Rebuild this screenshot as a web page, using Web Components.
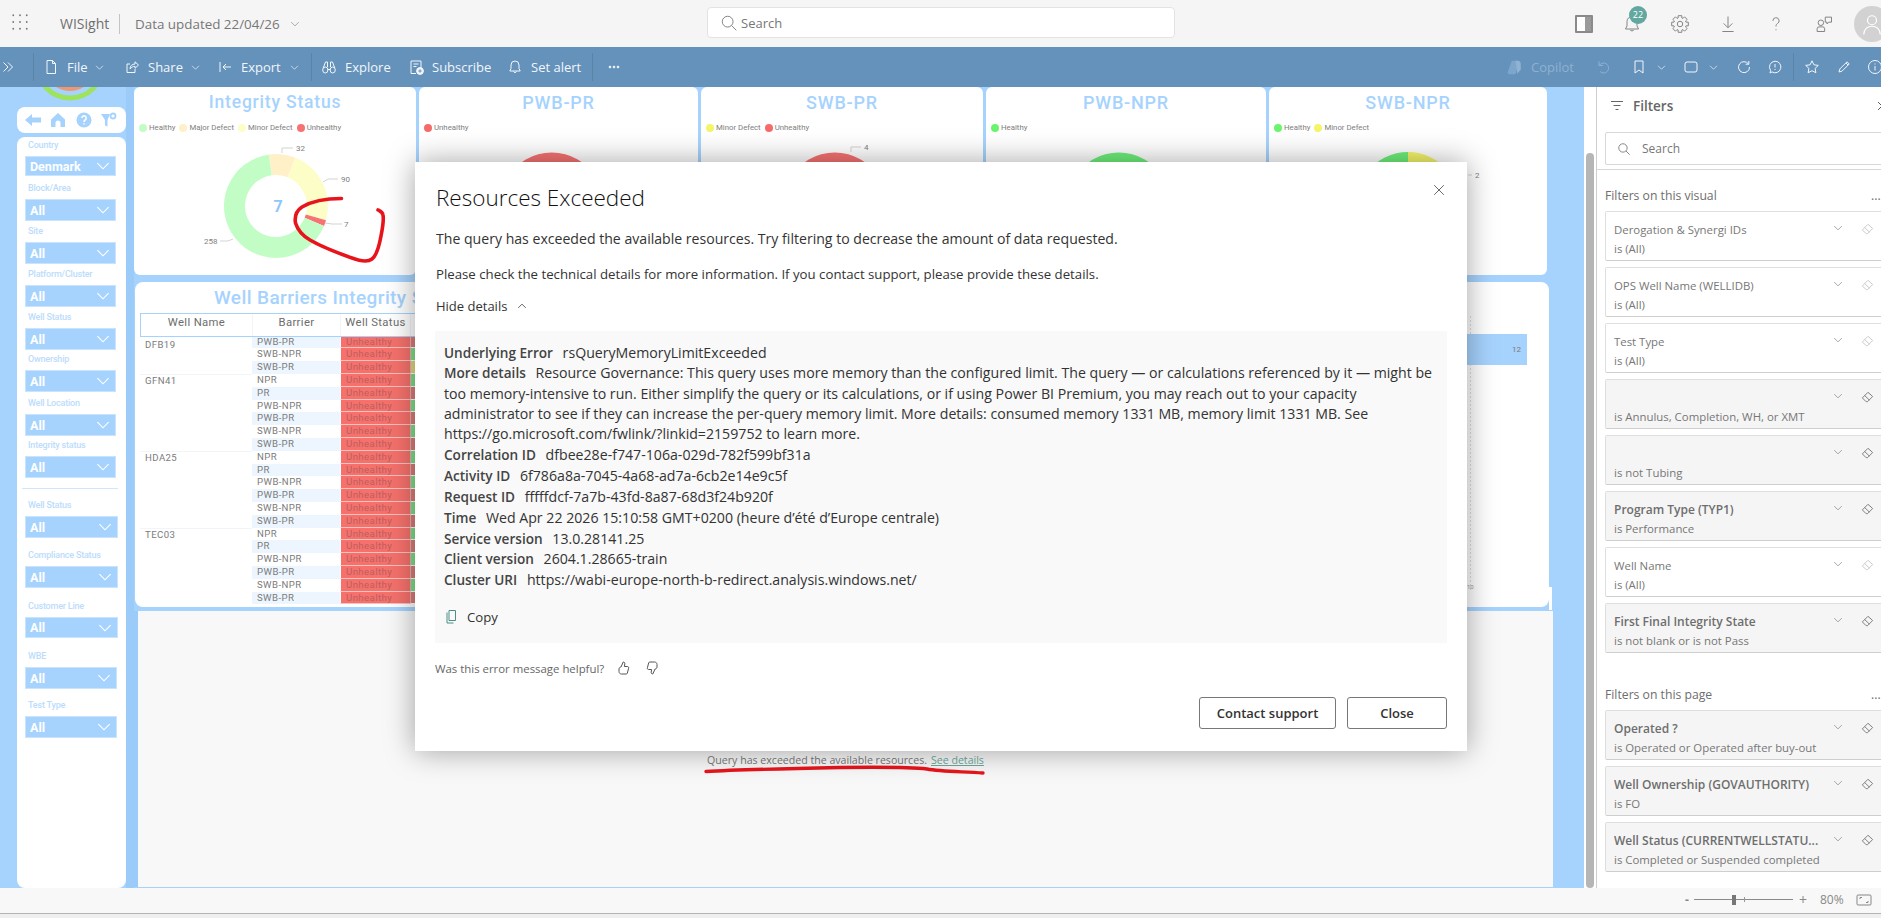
<!doctype html>
<html>
<head>
<meta charset="utf-8">
<title>WISight</title>
<style>
  html, body { margin: 0; height: 100%; overflow: hidden; }
  body {
    position: relative;
    width: 1881px; height: 918px;
    display: flex; flex-direction: column;
    background: #efefef;
    font-family: "Open Sans", "Noto Sans", sans-serif;
  }
</style>
</head>
<body>

<wi-topbar></wi-topbar>
<wi-ribbon></wi-ribbon>

<wi-workspace>
  <wi-report>
    <wi-slicer-rail slot="rail">
      <wi-slicer label="Country" value="Denmark" style="--top:-2px;--h:20px"></wi-slicer>
      <wi-slicer label="Block/Area" style="--top:2px"></wi-slicer>
      <wi-slicer label="Site"></wi-slicer>
      <wi-slicer label="Platform/Cluster"></wi-slicer>
      <wi-slicer label="Well Status"></wi-slicer>
      <wi-slicer label="Ownership" style="--top:-1px"></wi-slicer>
      <wi-slicer label="Well Location" style="--top:1px"></wi-slicer>
      <wi-slicer label="Integrity status" style="--top:-1px"></wi-slicer>
      <hr slot="lower" style="border:0;height:1px;background:#cfe6fd;margin:10px 0 0 -3px;width:96px">
      <wi-slicer slot="lower" label="Well Status" style="--top:6px;--w:93px"></wi-slicer>
      <wi-slicer slot="lower" label="Compliance Status" style="--top:7px;--w:93px"></wi-slicer>
      <wi-slicer slot="lower" label="Customer Line" style="--top:8px;--w:93px;--h:21px"></wi-slicer>
      <wi-slicer slot="lower" label="WBE" style="--top:8px;--w:92px"></wi-slicer>
      <wi-slicer slot="lower" label="Test Type" style="--top:6px;--w:92px"></wi-slicer>
    </wi-slicer-rail>

    <wi-chart-card slot="charts" heading="Integrity Status" cx="142" cy="69" hole="31"
      segments="30:#fff0c8,84:#fdfdc8,6.5:#f77272,239.5:#c3fdc6"
      labels='[["32",162,11,"148,16 148,11 159,11"],["90",207,42,"189,45 194,42 204,42"],["7",210,87,"191,86 198,87 208,87"],["258",70,104,"99,102 94,104 86,104"]]'
      center="7" style="--ts:17.5px">
      <wi-legend color="#c3fdc6">Healthy</wi-legend>
      <wi-legend color="#fff0c8">Major Defect</wi-legend>
      <wi-legend color="#fdfdc8">Minor Defect</wi-legend>
      <wi-legend color="#f77272">Unhealthy</wi-legend>
    </wi-chart-card>
    <wi-chart-card slot="charts" heading="PWB-PR" cx="140" cy="67" hole="31" segments="360:#f77272">
      <wi-legend color="#f76b6b">Unhealthy</wi-legend>
    </wi-chart-card>
    <wi-chart-card slot="charts" heading="SWB-PR" cx="141" cy="67" hole="31" segments="360:#f77272"
      labels='[["4",163,10,"150,15 150,10 160,10"]]'>
      <wi-legend color="#f5f56a">Minor Defect</wi-legend>
      <wi-legend color="#f76b6b">Unhealthy</wi-legend>
    </wi-chart-card>
    <wi-chart-card slot="charts" heading="PWB-NPR" cx="140" cy="67" hole="31" segments="360:#6ef07a">
      <wi-legend color="#6bf56f">Healthy</wi-legend>
    </wi-chart-card>
    <wi-chart-card slot="charts" heading="SWB-NPR" cx="139" cy="67" hole="31" start="0" segments="50:#f5f56a,310:#6ef07a"
      labels='[["2",206,38,"199,38 203,38"]]'>
      <wi-legend color="#6bf56f">Healthy</wi-legend>
      <wi-legend color="#f5f56a">Minor Defect</wi-legend>
    </wi-chart-card>

    <wi-barrier-card slot="table" heading="Well Barriers Integrity S"></wi-barrier-card>

    <wi-blank-visual slot="blank"></wi-blank-visual>
  </wi-report>

  <wi-filter-pane>
    <wi-filter-card heading="Derogation &amp; Synergi IDs" value="is (All)"></wi-filter-card>
    <wi-filter-card heading="OPS Well Name (WELLIDB)" value="is (All)"></wi-filter-card>
    <wi-filter-card heading="Test Type" value="is (All)"></wi-filter-card>
    <wi-filter-card applied value="is Annulus, Completion, WH, or XMT"></wi-filter-card>
    <wi-filter-card applied value="is not Tubing"></wi-filter-card>
    <wi-filter-card applied heading="Program Type (TYP1)" value="is Performance"></wi-filter-card>
    <wi-filter-card heading="Well Name" value="is (All)"></wi-filter-card>
    <wi-filter-card applied heading="First Final Integrity State" value="is not blank or is not Pass"></wi-filter-card>
    <wi-filter-card slot="page" applied heading="Operated ?" value="is Operated or Operated after buy-out"></wi-filter-card>
    <wi-filter-card slot="page" applied heading="Well Ownership (GOVAUTHORITY)" value="is FO"></wi-filter-card>
    <wi-filter-card slot="page" applied heading="Well Status (CURRENTWELLSTATU..." value="is Completed or Suspended completed"></wi-filter-card>
  </wi-filter-pane>
</wi-workspace>

<wi-statusbar></wi-statusbar>
<wi-annotations></wi-annotations>
<wi-error-dialog></wi-error-dialog>

<template id="wi-topbar-template">
  <style>
    :host { display: grid; grid-template-columns: 707px 468px 1fr; height: 47px; background: #f5f5f5; color: #777; font-size: 13px; overflow: hidden; flex: none; --sw: .8; }
    .left { display: flex; align-items: center; }
    .waffle { width: 60px; padding-left: 11px; box-sizing: border-box; color: #777; }
    .name { padding-right: 9px; margin-right: 15px; border-right: 1px solid #c4c4c4; line-height: 20px; color: #707070; font-size: 14px; width: 50px; white-space: nowrap; }
    .data { margin-right: 9px; font-size: 13.4px; white-space: nowrap; }
    .search { margin: 7px 0 9px; background: #fff; border: 1px solid #e3e3e3; border-radius: 4px; display: flex; align-items: center; gap: 3px; padding-left: 12px; color: #777; }
    .right { display: flex; align-items: center; padding-left: 385px; }
    .cell { flex: 0 0 48px; display: flex; justify-content: center; position: relative; color: #858585; }
    .badge { position: absolute; left: 21px; top: -8px; width: 18px; height: 18px; border-radius: 50%; background: #62a8a0; color: #fff; font-size: 9px; text-align: center; line-height: 18px; }
    .panel { width: 14px; height: 14px; border: 2px solid #8a8a8a; background: linear-gradient(to right, #fff 60%, #9a9a9a 60%); border-radius: 1px; }
    .avatar { flex: 0 0 36px; height: 36px; border-radius: 50%; margin-left: 6px; background: #d2d2d2; color: #fff; display: flex; align-items: center; justify-content: center; }
  </style>
  <div class="left">
    <div class="waffle"><wi-icon name="waffle" size="18"></wi-icon></div>
    <span class="name">WISight</span>
    <span class="data">Data updated 22/04/26</span>
    <wi-icon name="chev" size="12"></wi-icon>
  </div>
  <div class="search"><wi-icon name="search" size="18"></wi-icon><span>Search</span></div>
  <div class="right">
    <div class="cell"><div class="panel"></div></div>
    <div class="cell"><wi-icon name="bell" size="20"></wi-icon><span class="badge">22</span></div>
    <div class="cell"><wi-icon name="gear" size="20"></wi-icon></div>
    <div class="cell"><wi-icon name="download" size="20"></wi-icon></div>
    <div class="cell"><wi-icon name="help" size="20"></wi-icon></div>
    <div class="cell"><wi-icon name="people" size="20"></wi-icon></div>
    <div class="avatar"><wi-icon name="person" size="24"></wi-icon></div>
  </div>
</template>

<template id="wi-ribbon-template">
  <style>
    :host { display: flex; align-items: center; height: 40px; background: #6592bb; color: #f2f6fa; font-size: 13px; overflow: hidden; flex: none; }
    .lead { flex: 0 0 33px; display: flex; justify-content: center; padding-right: 17px; box-sizing: border-box; }
    .sep { flex: none; width: 1px; height: 28px; background: #5a83a8; }
    .b { display: flex; align-items: center; flex: none; }
    .b wi-icon { margin-right: 8px; }
    .b .t { white-space: nowrap; }
    .b wi-icon.c { margin: 0 0 0 6px; }
    .r { display: flex; align-items: center; justify-content: center; flex: none; width: 24px; }
    .r.n { width: 20px; }
    .dim { color: #8fb1d1; }
  </style>
  <div class="lead"><wi-icon name="rev" size="16"></wi-icon></div>
  <div class="sep"></div>
  <div class="b" style="width:72px;margin-left:9px"><wi-icon name="file" size="16"></wi-icon><span class="t" style="width:21px">File</span><wi-icon class="c" name="chev" size="11"></wi-icon></div>
  <div class="b" style="width:86px;margin-left:9px"><wi-icon name="share" size="16"></wi-icon><span class="t" style="width:36px">Share</span><wi-icon class="c" name="chev" size="11"></wi-icon></div>
  <div class="b" style="width:86px;margin-left:7px"><wi-icon name="export" size="16"></wi-icon><span class="t" style="width:42px">Export</span><wi-icon class="c" name="chev" size="11"></wi-icon></div>
  <div class="sep" style="margin-left:8px"></div>
  <div class="b" style="width:87px;margin-left:9px"><wi-icon name="binoc" size="16"></wi-icon><span class="t">Explore</span></div>
  <div class="b" style="width:99px"><wi-icon name="subscribe" size="16"></wi-icon><span class="t">Subscribe</span></div>
  <div class="b" style="width:85px"><wi-icon name="bell" size="16"></wi-icon><span class="t">Set alert</span></div>
  <div class="sep"></div>
  <div class="b" style="margin-left:13px;width:899px"><wi-icon name="dots" size="16"></wi-icon></div>
  <div class="b dim" style="width:84px"><wi-icon name="copilot" size="18"></wi-icon><span class="t">Copilot</span></div>
  <div class="r dim" style="width:28px"><wi-icon name="undo" size="16"></wi-icon></div>
  <div class="r" style="margin-left:10px"><wi-icon name="bookmark" size="16"></wi-icon></div>
  <div class="r n"><wi-icon name="chev" size="11"></wi-icon></div>
  <div class="r" style="margin-left:8px"><wi-icon name="square" size="16"></wi-icon></div>
  <div class="r n"><wi-icon name="chev" size="11"></wi-icon></div>
  <div class="r" style="margin-left:9px"><wi-icon name="refresh" size="16"></wi-icon></div>
  <div class="r" style="margin-left:7px"><wi-icon name="chat" size="16"></wi-icon></div>
  <div class="sep" style="margin-left:6px"></div>
  <div class="r" style="margin-left:6px"><wi-icon name="star" size="16"></wi-icon></div>
  <div class="r" style="margin-left:8px"><wi-icon name="pencil" size="16"></wi-icon></div>
  <div class="r" style="margin-left:7px"><wi-icon name="info" size="16"></wi-icon></div>
</template>

<template id="wi-workspace-template">
  <style>
    :host { display: flex; height: 801px; flex: none; overflow: hidden; }
  </style>
  <slot></slot>
</template>

<template id="wi-report-template">
  <style>
    :host { display: flex; flex: 0 0 1584px; background: #a6d3fe; }
    .main { flex: 1; display: flex; flex-direction: column; min-width: 0; }
    .charts { display: grid; grid-template-columns: 282px 279px 282px 280px 278px; column-gap: 3px; height: 188px; flex: none; }
    .table { margin: 7px 35px 0 1px; height: 325px; flex: none; display: block; }
    .blank { margin-top: 4px; flex: 1; margin-bottom: 1px; background: #9bcbf8; padding-left: 4px; margin-right: 31px; display: flex; }
  </style>
  <slot name="rail"></slot>
  <div class="main">
    <div class="charts"><slot name="charts"></slot></div>
    <div class="table"><slot name="table"></slot></div>
    <div class="blank"><slot name="blank"></slot></div>
  </div>
</template>

<template id="wi-slicer-rail-template">
  <style>
    :host { display: flex; flex-direction: column; flex: 0 0 134px; box-sizing: border-box; padding-left: 17px; background: linear-gradient(to right, #a6d3fe 126px, #9bcbf8 126px); }
    .ring { height: 20px; flex: none; overflow: hidden; width: 109px; }
    .ring svg { display: block; }
    .nav { flex: none; width: 109px; height: 26px; background: #fff; border-radius: 8px; display: flex; align-items: center; justify-content: space-between; padding: 0 9px 0 8px; box-sizing: border-box; color: #a6d3fe; }
    .list { margin-top: 4px; flex: 1; width: 109px; box-sizing: border-box; background: #fff; border-radius: 8px; padding: 0 8px; display: flex; flex-direction: column; }
  </style>
  <div class="ring">
    <svg width="109" height="20" viewBox="0 0 109 20">
      <circle cx="53" cy="-22" r="33" fill="none" stroke="#9de35b" stroke-width="5"/>
      <circle cx="53" cy="-22" r="26" fill="#f09670"/>
    </svg>
  </div>
  <div class="nav">
    <wi-icon name="navback" size="16"></wi-icon>
    <wi-icon name="navhome" size="16"></wi-icon>
    <wi-icon name="navhelp" size="16"></wi-icon>
    <wi-icon name="navtool" size="16"></wi-icon>
  </div>
  <div class="list">
    <slot></slot>
    <slot name="lower"></slot>
  </div>
</template>

<template id="wi-slicer-template">
  <style>
    :host { display: block; margin-top: var(--top, 0); font-family: Roboto, sans-serif; }
    .label { color: #bcdcfc; font-size: 9px; letter-spacing: -.2px; font-weight: 500; line-height: 21px; height: 21px; padding-left: 3px; white-space: nowrap; }
    .box { height: var(--h, 22px); box-sizing: border-box; width: var(--w, 91px); background: #a6d3fe; border: 1px solid #cbe4fd; color: #fff; font-weight: 700; font-size: 12.5px; display: flex; align-items: center; justify-content: space-between; padding: 0 3px 0 4px; }
    wi-icon { color: #fff; }
  </style>
  <div class="label" id="label"></div>
  <div class="box"><span id="value"></span><wi-icon name="chev" size="18"></wi-icon></div>
</template>

<template id="wi-chart-card-template">
  <style>
    :host { display: flex; flex-direction: column; background: #fff; border-radius: 6px; overflow: hidden; font-family: Roboto, sans-serif; height: 188px; }
    .title { flex: none; height: 28px; line-height: 31px; text-align: center; color: #a6d3fe; font-size: var(--ts, 18px); font-weight: 500; letter-spacing: .8px; }
    .legend { flex: none; height: 22px; display: flex; align-items: center; gap: 4px; padding-left: 5px; padding-top: 3px; box-sizing: border-box; }
    svg { display: block; }
    text { font-family: Roboto, sans-serif; font-size: 8px; fill: #808080; }
    text.center { font-size: 16px; font-weight: 700; fill: #8fc6fb; }
  </style>
  <div class="title" id="title"></div>
  <div class="legend"><slot></slot></div>
  <svg id="chart" width="282" height="138"></svg>
</template>

<template id="wi-legend-template">
  <style>
    :host { display: inline-flex; align-items: center; gap: 2px; font-family: Roboto, sans-serif; font-size: 7.8px; color: #808080; white-space: nowrap; }
    i { width: 8px; height: 8px; border-radius: 50%; background: var(--c); }
  </style>
  <i></i><slot></slot>
</template>

<template id="wi-barrier-card-template">
  <style>
    :host { display: block; position: relative; height: 325px; background: #fff; border-radius: 8px; font-family: Roboto, sans-serif; color: #7b7b7b; }
    .title { height: 31px; line-height: 32px; padding-left: 79px; font-size: 19px; font-weight: 500; color: #a6d3fe; letter-spacing: .4px; white-space: nowrap; overflow: hidden; }
    .wrap { display: flex; }
    .table { flex: 0 0 335px; margin-left: 5px; overflow: hidden; }
    .head { display: grid; grid-template-columns: 112px 88px 70px 65px; height: 24px; box-sizing: border-box; border: 1px solid #a6d3fe; border-width: 1.5px 0 1.5px 1.5px; position: relative; background: #fff; z-index: 1; }
    .head div { text-align: center; font-size: 11.3px; line-height: 14px; color: #6d6d6d; letter-spacing: .35px; border-right: 1px solid #f0f4f8; padding-top: 2px; box-sizing: border-box; }
    .rows { display: grid; grid-template-columns: 112px 88px 70px 65px; grid-auto-rows: 12.8px; margin-top: -1.4px; font-size: 9.6px; letter-spacing: .42px; line-height: 12.8px; }
    .well { padding-left: 5px; border-top: 1px solid #f1f5f9; box-sizing: border-box; line-height: 11.5px; }
    .well:first-child { padding-top: 2px; }
    .barrier { padding-left: 5px; }
    .barrier.band { background: #edf6fe; }
    .status { background: #f6716c; color: #b9605f; padding-left: 5px; border-bottom: 1px solid #f5c3c0; box-sizing: border-box; border-left: 1px solid #fff; }
    .next { border-left: 1px solid #e8b0ac; border-bottom: 1px solid #fff; box-sizing: border-box; }
    .plot { flex: 1; display: flex; justify-content: flex-end; padding-right: 22px; }
    .area { width: 107px; margin-top: 3px; height: 274px; background: repeating-linear-gradient(to bottom, #ddd 0 2px, transparent 2px 4px) 50px 0 / 1px 100% no-repeat; display: flex; flex-direction: column; }
    .bar { height: 31px; background: #a6d3fe; margin-top: 18px; text-align: right; padding-right: 6px; font-size: 8px; line-height: 31px; color: #7a7a7a; flex: none; }
    .tick { margin-top: auto; font-size: 6px; color: #9a9a9a; padding-left: 47px; }
    .patch { position: absolute; right: -3px; bottom: -3px; width: 3px; height: 23px; background: #fff; }
  </style>
  <div class="title" id="title"></div>
  <div class="wrap">
    <div class="table">
      <div class="head"><div>Well Name</div><div>Barrier</div><div>Well Status</div><div></div></div>
      <div class="rows" id="rows"></div>
    </div>
    <div class="plot"><div class="area"><div class="bar">12</div><div class="tick">10</div></div></div>
  </div>
  <div class="patch"></div>
</template>

<template id="wi-blank-visual-template">
  <style>
    :host { display: flex; flex: 1; justify-content: center; padding-top: 142px; box-sizing: border-box; background: #f8f8f8; font-size: 10.6px; color: #787878; }
    a { color: #6da89f; margin-left: 4px; text-decoration: underline; }
  </style>
  <span>Query has exceeded the available resources.<a>See details</a></span>
</template>

<template id="wi-filter-pane-template">
  <style>
    :host { display: flex; flex-direction: column; flex: 1; min-width: 0; background: #fff; overflow: hidden; color: #6e6e6e; position: relative; }
    .scrollrow { display: flex; flex: 1; min-height: 0; }
    .track { flex: 0 0 13px; box-sizing: border-box; padding: 66px 2px 0; border-right: 1px solid #cfcfcf; }
    .thumb { height: 100%; background: #b6b6b6; border-radius: 4px; }
    .pane { flex: 1; min-width: 0; overflow: hidden; }
    .head { height: 83px; border-bottom: 1px solid #d8d8d8; box-sizing: border-box; }
    .title { height: 38px; display: flex; align-items: center; padding-left: 12px; gap: 8px; font-size: 13.5px; font-weight: 600; color: #666; position: relative; }
    .title wi-icon.x { position: absolute; left: 278px; color: #444; }
    .search { margin: 7px 0 0 8px; width: 290px; height: 33px; border: 1px solid #d8d8d8; border-radius: 2px; box-sizing: border-box; display: flex; align-items: center; padding-left: 11px; gap: 11px; font-size: 12px; color: #777; }
    .section { padding: 17px 0 6px 8px; height: 18px; line-height: 18px; font-size: 12.2px; color: #6e6e6e; position: relative; }
    .section.second { padding-top: 27px; }
    .section span { position: absolute; left: 274px; }
    .cards { padding-left: 8px; }
  </style>
  <div class="scrollrow">
    <div class="track"><div class="thumb"></div></div>
    <div class="pane">
      <div class="head">
        <div class="title"><wi-icon name="funnel" size="16"></wi-icon>Filters<wi-icon class="x" name="rev" size="14"></wi-icon></div>
        <div class="search"><wi-icon name="search" size="14"></wi-icon>Search</div>
      </div>
      <div class="section">Filters on this visual<span>...</span></div>
      <div class="cards"><slot></slot></div>
      <div class="section second">Filters on this page<span>...</span></div>
      <div class="cards"><slot name="page"></slot></div>
    </div>
  </div>
</template>

<template id="wi-filter-card-template">
  <style>
    :host { display: block; width: 292px; height: 50px; margin-bottom: 6px; box-sizing: border-box; border: 1px solid #dedede; border-bottom-color: #cfcfcf; border-radius: 2px; background: #fff; position: relative; font-size: 11.4px; color: #777; }
    :host([applied]) { background: #f5f5f5; }
    :host([applied]) .h { font-weight: 600; color: #6e6e6e; font-size: 12px; }
    .row { display: flex; height: 30px; padding-left: 8px; align-items: center; }
    .h { width: 209px; white-space: nowrap; overflow: hidden; padding-top: 4px; }
    .chev { width: 30px; color: #888; padding-left: 9px; box-sizing: border-box; margin-top: 2px; }
    .er { color: #c8c8c8; margin-left: 7px; margin-top: 2px; }
    :host([applied]) .er { color: #777; }
    .v { padding-left: 8px; line-height: 14px; white-space: nowrap; }
  </style>
  <div class="row"><span class="h" id="h"></span><wi-icon class="chev" name="chev" size="12"></wi-icon><wi-icon class="er" name="eraser" size="15"></wi-icon></div>
  <div class="v" id="v"></div>
</template>

<template id="wi-statusbar-template">
  <style>
    :host { display: flex; align-items: center; height: 26px; box-sizing: border-box; background: #f8f8f8; border-bottom: 1px solid #b4b4b4; color: #888; font-size: 12px; padding-left: 1685px; flex: none; padding-bottom: 2px; }
    .minus { width: 9px; font-weight: 700; }
    .track { width: 99px; height: 1px; background: #8a8a8a; position: relative; }
    .thumb { position: absolute; left: 38px; top: -4px; width: 4px; height: 10px; background: #777; }
    .tick { position: absolute; left: 50px; top: -2px; width: 1px; height: 5px; background: #999; }
    .plus { margin-left: 6px; width: 21px; font-size: 14px; }
    .pct { width: 36px; }
  </style>
  <span class="minus">-</span>
  <div class="track"><div class="thumb"></div><div class="tick"></div></div>
  <span class="plus">+</span>
  <span class="pct">80%</span>
  <wi-icon name="fit" size="16"></wi-icon>
</template>

<template id="wi-annotations-template">
  <style>
    :host { position: absolute; left: 0; top: 0; width: 1881px; height: 918px; pointer-events: none; z-index: 4; }
    svg { position: absolute; left: 0; top: 0; }
    path { fill: none; stroke: #e8141c; stroke-linecap: round; stroke-linejoin: round; }
  </style>
  <svg width="1881" height="918">
    <path stroke-width="3.6" d="M341.5 198.5C325 198.5 312 201 302 207C296 211 294.5 217 295.5 223C298 231 303 236 310 240C322 247 335 252 352 258C360 261 368 262 372 259C376 256 379 247 381 236C383 226 384 220 383 215C382.500 212 380 211 378 210"/>
    <path stroke-width="3.4" d="M706 771.500C740 769.500 790 768.500 840 767.500C880 767 915 767.500 927 769C940 771.500 960 771.500 983 773"/>
  </svg>
</template>

<template id="wi-error-dialog-template">
  <style>
    :host { position: absolute; z-index: 10; left: 415px; top: 162px; width: 1052px; height: 589px; box-sizing: border-box; background: #fff; padding: 0 20px 0 20px; color: #333; font-size: 13.4px; box-shadow: 0 0 28px rgba(0,0,0,.36); display: flex; flex-direction: column; }
    .x { position: absolute; right: 21px; top: 21px; color: #555; }
    h2 { font-weight: 300; font-size: 22.5px; margin: 20px 0 0 1px; line-height: 32px; color: #111; height: 32px; }
    p { margin: 0 0 0 1px; line-height: 20px; color: #333; }
    .p1 { margin-top: 15px; font-size: 14.1px; }
    .p2 { margin-top: 15px; font-size: 13.23px; }
    .toggle { margin: 12px 0 0 1px; line-height: 20px; display: flex; align-items: center; gap: 9px; height: 20px; color: #333; font-size: 13px; }
    .details { margin-top: 15px; height: 312px; box-sizing: border-box; background: #f9f9f9; padding: 11.500px 9px 0; width: 1012px; font-size: 14.15px; line-height: 20.35px; color: #333; white-space: nowrap; }
    .details div { margin-bottom: .5px; }
    b { font-weight: 600; color: #444; margin-right: 6px; font-size: 13.6px; }
    .copy { display: flex; align-items: center; margin: 16px 0 0 -1px; gap: 8px; font-size: 13.2px; }
    .copy wi-icon { color: #4d8f88; }
    .help { margin: 15px 0 0 0; display: flex; align-items: center; font-size: 11.4px; color: #666; height: 20px; }
    .help span { width: 180px; }
    .help wi-icon { margin-right: 14px; color: #555; }
    .foot { margin-top: 19px; display: flex; justify-content: flex-end; gap: 11px; }
    button { height: 32px; border: 1px solid #777; border-radius: 3px; background: #fff; font: 600 13px "Open Sans", sans-serif; color: #333; padding: 0; }
    .cs { width: 137px; }
    .cl { width: 100px; }
  </style>
  <wi-icon class="x" name="close" size="14"></wi-icon>
  <h2>Resources Exceeded</h2>
  <p class="p1">The query has exceeded the available resources. Try filtering to decrease the amount of data requested.</p>
  <p class="p2">Please check the technical details for more information. If you contact support, please provide these details.</p>
  <div class="toggle">Hide details <wi-icon name="caret" size="12"></wi-icon></div>
  <div class="details">
    <div><b>Underlying Error</b> rsQueryMemoryLimitExceeded</div>
    <div><b>More details</b> Resource Governance: This query uses more memory than the configured limit. The query — or calculations referenced by it — might be<br>too memory-intensive to run. Either simplify the query or its calculations, or if using Power BI Premium, you may reach out to your capacity<br>administrator to see if they can increase the per-query memory limit. More details: consumed memory 1331 MB, memory limit 1331 MB. See<br>https://go.microsoft.com/fwlink/?linkid=2159752 to learn more.</div>
    <div><b>Correlation ID</b> dfbee28e-f747-106a-029d-782f599bf31a</div>
    <div><b>Activity ID</b> 6f786a8a-7045-4a68-ad7a-6cb2e14e9c5f</div>
    <div><b>Request ID</b> fffffdcf-7a7b-43fd-8a87-68d3f24b920f</div>
    <div><b>Time</b> Wed Apr 22 2026 15:10:58 GMT+0200 (heure d’été d’Europe centrale)</div>
    <div><b>Service version</b> 13.0.28141.25</div>
    <div><b>Client version</b> 2604.1.28665-train</div>
    <div><b>Cluster URI</b> https://wabi-europe-north-b-redirect.analysis.windows.net/</div>
    <div class="copy"><wi-icon name="copy" size="16"></wi-icon>Copy</div>
  </div>
  <div class="help"><span>Was this error message helpful?</span><wi-icon name="thumbup" size="16"></wi-icon><wi-icon name="thumbdown" size="16"></wi-icon></div>
  <div class="foot"><button class="cs">Contact support</button><button class="cl">Close</button></div>
</template>

<script>
function gearPath() {
  let d = '';
  for (let i = 0; i < 8; i++) {
    const a = i * Math.PI / 4;
    [[-.3, 5], [-.22, 6.8], [.22, 6.8], [.3, 5]].forEach((p, j) => {
      const x = 8 + p[1] * Math.sin(a + p[0]), y = 8 - p[1] * Math.cos(a + p[0]);
      d += (i === 0 && j === 0 ? 'M' : 'L') + x.toFixed(2) + ' ' + y.toFixed(2);
    });
  }
  return d + 'Z';
}

const ICONS = {
  waffle: [2, 8, 14].map(y => [2, 8, 14].map(x => `<circle cx="${x}" cy="${y}" r=".8" fill="currentColor" stroke="none"/>`).join('')).join(''),
  chev: '<path d="M3 5.5l5 5 5-5"/>',
  caret: '<path d="M3 10.500l5-5 5 5"/>',
  rev: '<path d="M3.500 3.500L8 8l-4.500 4.500M8 3.500L12.500 8 8 12.500"/>',
  search: '<circle cx="6.800" cy="6.800" r="4.800"/><path d="M10.300 10.300L14.500 14.500"/>',
  file: '<path d="M4 1.500h5.500l3 3v10H4zM9.500 1.500v3h3"/>',
  share: '<path d="M11 10v3.500H3V5h3"/><path d="M6 10c0-3 2-5 5-5V2.800L14.500 6 11 9.300V7.300c-2 0-3.500 .9-5 2.700z"/>',
  export: '<path d="M3 3v10M14 8H6M9 5L6 8l3 3"/>',
  binoc: '<ellipse cx="4.300" cy="11" rx="2.600" ry="3"/><ellipse cx="11.700" cy="11" rx="2.600" ry="3"/><path d="M2.200 9L4.500 3h2v5M13.800 9L11.500 3h-2v5M6.800 10.500h2.400"/>',
  subscribe: '<path d="M3 14.500V2h10v7M3 14.500h5"/><path d="M5.500 5h5M5.500 7.500h3"/><circle cx="12" cy="12" r="3.400" fill="currentColor"/><path d="M12 10.300v3.400M10.300 12h3.400" stroke="#6592bb"/>',
  bell: '<path d="M8 2a4 4 0 0 0-4 4v3.500L2.800 12h10.400L12 9.500V6a4 4 0 0 0-4-4zM6.500 12.500a1.600 1.600 0 0 0 3 0"/>',
  dots: '<circle cx="4" cy="8" r=".9" fill="currentColor"/><circle cx="8" cy="8" r=".9" fill="currentColor"/><circle cx="12" cy="8" r=".9" fill="currentColor"/>',
  copilot: '<path d="M6 2.500h5c1 0 1.500 1 1.200 2L9.800 13c-.3 .9-1 1.500-2 1.500H4c-1.200 0-1.800-1-1.500-2z" fill="#7ea6cc" stroke="none"/><path d="M9.500 2.500h2c1.600 0 2.500 1.200 2.500 2.800v5L11 14z" fill="#8fb3d4" stroke="none"/>',
  undo: '<path d="M4 2.500v4h4M4.300 6.500A5 5 0 1 1 5 12.500"/>',
  bookmark: '<path d="M4 2h8v12l-4-3-4 3z"/>',
  square: '<rect x="2" y="3" width="12" height="10" rx="2"/>',
  refresh: '<path d="M12.500 5A5.500 5.500 0 1 0 13.500 8M12.800 2v3.200H9.600"/>',
  chat: '<path d="M8 2.200a5.800 5.800 0 1 1-3 10.700L3 14l.6-2.600A5.800 5.800 0 0 1 8 2.200z"/><path d="M8 5v3.500M8 10v1"/>',
  star: '<path d="M8 1.800l1.900 4 4.400.6-3.200 3 .8 4.400L8 11.700l-3.900 2.100.8-4.400-3.200-3 4.400-.6z"/>',
  pencil: '<path d="M3 13l.8-3L11 2.800l2.200 2.200L6 12.200zM10 4l2 2"/>',
  info: '<circle cx="8" cy="8" r="6.500"/><path d="M8 7v4.500M8 4.500v1"/>',
  gear: `<path d="${gearPath()}"/><circle cx="8" cy="8" r="2.200"/>`,
  download: '<path d="M8 2v9M4.500 7.500L8 11l3.500-3.500M3.500 14h9"/>',
  help: '<path d="M5.500 5.500a2.500 2.500 0 1 1 3.600 2.200C8.300 8.200 8 8.700 8 10M8 12.200v.8"/>',
  people: '<circle cx="5.500" cy="7" r="2.200"/><path d="M2.500 14v-2.200a1.500 1.500 0 0 1 1.500-1.500h3a1.500 1.500 0 0 1 1.500 1.500V14z"/><path d="M9 2.500h5v4h-2.200L10.400 8V6.500H9z"/>',
  person: '<circle cx="8" cy="5.500" r="3"/><path d="M2.500 15c0-3.500 2.500-5.500 5.500-5.500s5.500 2 5.500 5.500"/>',
  funnel: '<path d="M2 3.500h12M4.500 7.500h7M6.500 11.500h3"/>',
  eraser: '<path d="M2.500 9.500l6-6 5 4.500-5.500 5.500H6.500zM5 7l5 4.800"/>',
  thumbup: '<path d="M6 7l2.200-5c1.200 0 1.800.8 1.600 2L9.400 6.500h3c1 0 1.500.8 1.200 1.700l-1.300 5c-.2.6-.6.8-1.200.8H6.500C5 14 4 13 4 11.500V9c0-1 .8-2 2-2z"/>',
  thumbdown: '<path transform="rotate(180 8 8)" d="M6 7l2.200-5c1.200 0 1.800.8 1.600 2L9.400 6.500h3c1 0 1.500.8 1.200 1.700l-1.300 5c-.2.600-.6.800-1.200.8H6.500C5 14 4 13 4 11.500V9c0-1 .8-2 2-2z"/>',
  copy: '<path d="M6 1.500h6.500v10H6z"/><path d="M4 3.500v10.500h6.500"/>',
  close: '<path d="M2.500 2.500l11 11M13.500 2.500l-11 11"/>',
  fit: '<rect x="1" y="3" width="14" height="10" rx="1"/><path d="M4 7V5.500h2M12 9v1.500h-2"/>',
  navback: '<path d="M0 8l7-6v3.500h9v5H7V14z" fill="currentColor" stroke="none"/>',
  navhome: '<path d="M8 1L1 7.500V15h4.500v-4a2.500 2.500 0 0 1 5 0v4H15V7.500z" fill="currentColor" stroke="none"/>',
  navhelp: '<circle cx="8" cy="8" r="7.500" fill="currentColor" stroke="none"/><path d="M5.800 6a2.200 2.200 0 1 1 3.300 2C8.300 8.500 8 9 8 10M8 11.300v1.200" stroke="#fff" stroke-width="1.500"/>',
  navtool: '<path d="M0 2h9L6.500 8v6.500l-2.500-1V8z" fill="currentColor" stroke="none"/><circle cx="12" cy="4" r="2.500" stroke-width="1.800"/>'
};

class WiBase extends HTMLElement {
  constructor() {
    super();
    const template = document.getElementById(`${this.constructor.is}-template`);
    this.attachShadow({mode: 'open'});
    this.shadowRoot.appendChild(template.content.cloneNode(true));
    this.$ = {};
    this.shadowRoot.querySelectorAll('[id]').forEach((element) => {
      this.$[element.id] = element;
    });
  }
}

class WiIcon extends HTMLElement {
  static get is() { return 'wi-icon'; }
  connectedCallback() {
    if (this.shadowRoot) return;
    const size = this.getAttribute('size') || 16;
    this.attachShadow({mode: 'open'}).innerHTML = `
      <style>:host { display: inline-flex; flex: none; } svg { display: block; fill: none; stroke: currentColor; stroke-width: var(--sw, 1); }</style>
      <svg width="${size}" height="${size}" viewBox="0 0 16 16">${ICONS[this.getAttribute('name')] || ''}</svg>`;
  }
}

class WiTopbar extends WiBase { static get is() { return 'wi-topbar'; } }
class WiRibbon extends WiBase { static get is() { return 'wi-ribbon'; } }
class WiWorkspace extends WiBase { static get is() { return 'wi-workspace'; } }
class WiReport extends WiBase { static get is() { return 'wi-report'; } }
class WiSlicerRail extends WiBase { static get is() { return 'wi-slicer-rail'; } }
class WiBlankVisual extends WiBase { static get is() { return 'wi-blank-visual'; } }
class WiFilterPane extends WiBase { static get is() { return 'wi-filter-pane'; } }
class WiStatusbar extends WiBase { static get is() { return 'wi-statusbar'; } }
class WiAnnotations extends WiBase { static get is() { return 'wi-annotations'; } }
class WiErrorDialog extends WiBase { static get is() { return 'wi-error-dialog'; } }

class WiSlicer extends WiBase {
  static get is() { return 'wi-slicer'; }
  connectedCallback() {
    this.$.label.textContent = this.getAttribute('label');
    this.$.value.textContent = this.getAttribute('value') || 'All';
  }
}

class WiLegend extends WiBase {
  static get is() { return 'wi-legend'; }
  connectedCallback() {
    this.style.setProperty('--c', this.getAttribute('color'));
  }
}

class WiChartCard extends WiBase {
  static get is() { return 'wi-chart-card'; }
  connectedCallback() {
    this.$.title.textContent = this.getAttribute('heading');
    const cx = +this.getAttribute('cx'), cy = +this.getAttribute('cy');
    const r = 52, hole = +this.getAttribute('hole');
    let angle = this.hasAttribute('start') ? +this.getAttribute('start') : -8;
    let svg = '';
    const pt = (rad, deg) => {
      const a = deg * Math.PI / 180;
      return (cx + rad * Math.sin(a)).toFixed(2) + ' ' + (cy - rad * Math.cos(a)).toFixed(2);
    };
    this.getAttribute('segments').split(',').forEach((seg) => {
      const [sweep, color] = seg.split(':');
      const s = Math.min(+sweep, 359.99), end = angle + s, large = s > 180 ? 1 : 0;
      svg += `<path fill="${color}" d="M${pt(r, angle)}A${r} ${r} 0 ${large} 1 ${pt(r, end)}L${pt(hole, end)}A${hole} ${hole} 0 ${large} 0 ${pt(hole, angle)}Z"/>`;
      angle = end;
    });
    JSON.parse(this.getAttribute('labels') || '[]').forEach(([label, x, y, line]) => {
      svg += `<polyline points="${line}" fill="none" stroke="#c8c8c8" stroke-width=".8"/><text x="${x}" y="${y + 3}">${label}</text>`;
    });
    if (this.hasAttribute('center')) {
      svg += `<text class="center" x="${cx + 2}" y="${cy + 6}" text-anchor="middle">${this.getAttribute('center')}</text>`;
    }
    this.$.chart.innerHTML = svg;
  }
}

class WiBarrierCard extends WiBase {
  static get is() { return 'wi-barrier-card'; }
  connectedCallback() {
    this.$.title.textContent = this.getAttribute('heading');
    const full = ['NPR', 'PR', 'PWB-NPR', 'PWB-PR', 'SWB-NPR', 'SWB-PR'];
    const wells = [['DFB19', ['PWB-PR', 'SWB-NPR', 'SWB-PR']], ['GFN41', full], ['HDA25', full], ['TEC03', full]];
    let html = '', index = 0;
    wells.forEach(([well, barriers], w) => {
      barriers.forEach((barrier, i) => {
        if (i === 0) html += `<div class="well" style="grid-row:span ${barriers.length}">${well}</div>`;
        const band = index % 2 === 0 ? ' band' : '';
        let next = barrier.endsWith('NPR') ? '#7ddf8a' : '#dc7c78';
        if (w === 0 && i === 2) next = '#e0d77e';
        html += `<div class="barrier${band}" style="grid-column:2">${barrier}</div><div class="status" style="grid-column:3">Unhealthy</div><div class="next" style="grid-column:4;background:${next}"></div>`;
        index++;
      });
    });
    this.$.rows.innerHTML = html;
  }
}

class WiFilterCard extends WiBase {
  static get is() { return 'wi-filter-card'; }
  connectedCallback() {
    this.$.h.textContent = this.getAttribute('heading') || '';
    this.$.v.textContent = this.getAttribute('value');
  }
}

[WiIcon, WiTopbar, WiRibbon, WiWorkspace, WiReport, WiSlicerRail, WiSlicer, WiLegend, WiChartCard,
 WiBarrierCard, WiBlankVisual, WiFilterPane, WiFilterCard, WiStatusbar, WiAnnotations, WiErrorDialog]
  .forEach((element) => customElements.define(element.is, element));
</script>
</body>
</html>
